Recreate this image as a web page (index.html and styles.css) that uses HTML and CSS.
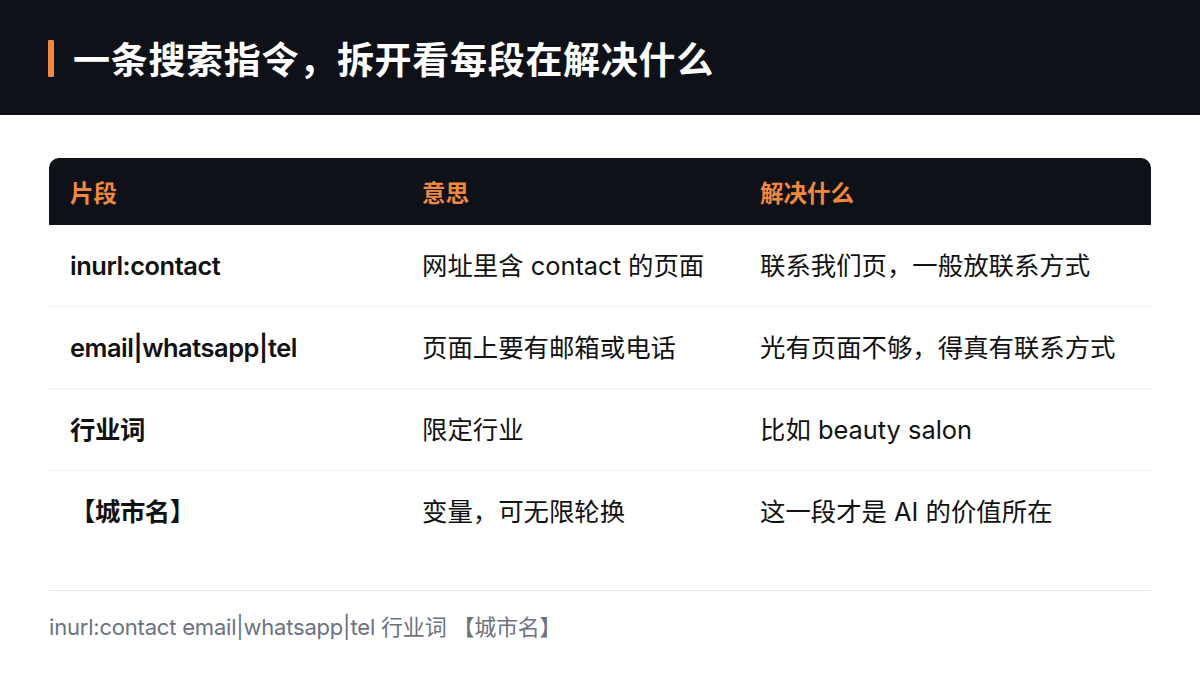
FILE: index.html
```html
<!DOCTYPE html>
<html lang="zh">
<head>
<meta charset="utf-8">
<link rel="stylesheet" href="styles.css">
</head>
<body>
<header class="topbar">
  <span class="accent"></span>
  <h1 class="title">一条搜索指令，拆开看每段在解决什么</h1>
</header>
<main class="content">
  <div class="table">
    <div class="row head">
      <div class="cell">片段</div>
      <div class="cell">意思</div>
      <div class="cell">解决什么</div>
    </div>
    <div class="row">
      <div class="cell key">inurl:contact</div>
      <div class="cell">网址里含 contact 的页面</div>
      <div class="cell">联系我们页，一般放联系方式</div>
    </div>
    <div class="row">
      <div class="cell key">email|whatsapp|tel</div>
      <div class="cell">页面上要有邮箱或电话</div>
      <div class="cell">光有页面不够，得真有联系方式</div>
    </div>
    <div class="row">
      <div class="cell key">行业词</div>
      <div class="cell">限定行业</div>
      <div class="cell">比如 beauty salon</div>
    </div>
    <div class="row last">
      <div class="cell key">【城市名】</div>
      <div class="cell">变量，可无限轮换</div>
      <div class="cell">这一段才是 AI 的价值所在</div>
    </div>
  </div>
  <p class="footer">inurl:contact email|whatsapp|tel 行业词 【城市名】</p>
</main>
</body>
</html>
```

FILE: styles.css
```css
* { box-sizing: border-box; }
html, body { margin: 0; padding: 0; }
body {
  width: 1200px;
  height: 682px;
  background: #ffffff;
  font-family: "Inter", "Noto Sans CJK SC", sans-serif;
  color: #111111;
  overflow: hidden;
}
.topbar {
  height: 115px;
  background: #0e1118;
  display: flex;
  align-items: center;
  padding-left: 48px;
  gap: 19px;
}
.accent {
  width: 6px;
  height: 37px;
  background: #f0883e;
  border-radius: 1px;
  margin-top: 1px;
}
.title {
  margin: 0;
  color: #ffffff;
  font-size: 37px;
  font-weight: 700;
  letter-spacing: 0.7px;
  line-height: 44px;
  font-family: "Noto Sans CJK SC", sans-serif;
}
.content {
  padding: 43px 49px 0 49px;
}
.table {
  width: 1102px;
}
.row {
  display: grid;
  grid-template-columns: 352px 338px 1fr;
  height: 82px;
  align-items: center;
  border-bottom: 1px solid #efefef;
  font-size: 25.4px;
  line-height: 32px;
}
.row.last { border-bottom: none; }
.row.head {
  height: 67px;
  background: #0e1118;
  border-radius: 10px 10px 0 0;
  border-bottom: none;
  color: #f0883e;
  font-size: 23.5px;
  font-weight: 700;
  font-family: "Noto Sans CJK SC", sans-serif;
}
.cell {
  padding-left: 21px;
  white-space: nowrap;
}
.key {
  font-weight: 600;
  letter-spacing: -0.45px;
}
.footer {
  margin: 37px 0 0 0;
  padding-top: 22px;
  border-top: 1px solid #e5e7eb;
  color: #6b7280;
  font-size: 22px;
  line-height: 28px;
  letter-spacing: -0.2px;
}
```
